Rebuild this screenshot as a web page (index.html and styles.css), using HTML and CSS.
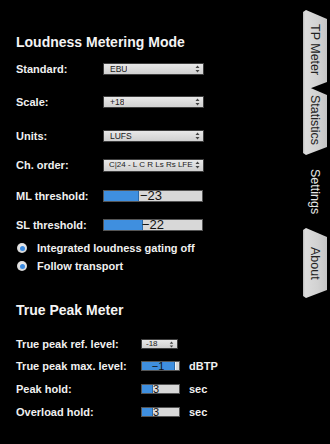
FILE: index.html
```html
<!DOCTYPE html>
<html>
<head>
<meta charset="utf-8">
<link rel="stylesheet" href="styles.css">
</head>
<body>
<div class="app">
  <main class="panel">
    <h2 class="title">Loudness Metering Mode</h2>
    <div class="row r-standard">
      <span class="label">Standard:</span>
      <div class="select"><span class="sel-text">EBU</span><svg class="arrows" width="5" height="8" viewBox="0 0 5 8"><path d="M2.5 0.5 L4.5 3 L0.5 3 Z M0.5 5 L4.5 5 L2.5 7.5 Z" fill="#444"/></svg></div>
    </div>
    <div class="row r-scale">
      <span class="label">Scale:</span>
      <div class="select"><span class="sel-text">+18</span><svg class="arrows" width="5" height="8" viewBox="0 0 5 8"><path d="M2.5 0.5 L4.5 3 L0.5 3 Z M0.5 5 L4.5 5 L2.5 7.5 Z" fill="#444"/></svg></div>
    </div>
    <div class="row r-units">
      <span class="label">Units:</span>
      <div class="select"><span class="sel-text">LUFS</span><svg class="arrows" width="5" height="8" viewBox="0 0 5 8"><path d="M2.5 0.5 L4.5 3 L0.5 3 Z M0.5 5 L4.5 5 L2.5 7.5 Z" fill="#444"/></svg></div>
    </div>
    <div class="row r-ch">
      <span class="label">Ch. order:</span>
      <div class="select select-tall"><span class="sel-text">C|24 - L C R Ls Rs LFE</span><svg class="arrows" width="5" height="8" viewBox="0 0 5 8"><path d="M2.5 0.5 L4.5 3 L0.5 3 Z M0.5 5 L4.5 5 L2.5 7.5 Z" fill="#444"/></svg></div>
    </div>
    <div class="row r-ml">
      <span class="label">ML threshold:</span>
      <div class="slider"><div class="fill" style="width:35px"></div><span class="val">−23</span></div>
    </div>
    <div class="row r-sl">
      <span class="label">SL threshold:</span>
      <div class="slider"><div class="fill" style="width:39px"></div><span class="val val-tight">−22</span></div>
    </div>
    <div class="row radio-row r-radio1">
      <span class="radio"><span class="dot"></span></span>
      <span class="radio-label">Integrated loudness gating off</span>
    </div>
    <div class="row radio-row r-radio2">
      <span class="radio"><span class="dot"></span></span>
      <span class="radio-label">Follow transport</span>
    </div>

    <h2 class="title title2">True Peak Meter</h2>
    <div class="row tp r-ref">
      <span class="label label-wide">True peak ref. level:</span>
      <div class="select select-small"><span class="sel-text">-18</span><svg class="arrows" width="5" height="7" viewBox="0 0 5 8"><path d="M2.5 0.5 L4.5 3 L0.5 3 Z M0.5 5 L4.5 5 L2.5 7.5 Z" fill="#444"/></svg></div>
    </div>
    <div class="row tp r-max">
      <span class="label label-wide">True peak max. level:</span>
      <div class="slider slider-small"><div class="fill fill-center" style="width:33px"><span class="val-small">−1</span></div><span class="sep"></span></div>
      <span class="unit">dBTP</span>
    </div>
    <div class="row tp r-peak">
      <span class="label label-wide">Peak hold:</span>
      <div class="slider slider-small"><div class="fill" style="width:11px"></div><span class="val-small">3</span></div>
      <span class="unit">sec</span>
    </div>
    <div class="row tp r-over">
      <span class="label label-wide">Overload hold:</span>
      <div class="slider slider-small"><div class="fill" style="width:11px"></div><span class="val-small">3</span></div>
      <span class="unit">sec</span>
    </div>
  </main>
  <nav class="tabs">
    <div class="tab tab-tp"><span class="tab-text">TP Meter</span></div>
    <div class="tab tab-stats"><span class="tab-text">Statistics</span></div>
    <div class="tab tab-settings"><span class="tab-text">Settings</span></div>
    <div class="tab tab-about"><span class="tab-text">About</span></div>
  </nav>
</div>
</body>
</html>
```
FILE: styles.css
```css
html, body {
  margin: 0;
  padding: 0;
  background: #000;
}
body {
  font-family: "Liberation Sans", Arial, sans-serif;
  color: #f0f0f0;
}
.app {
  display: flex;
  width: 330px;
  height: 444px;
  overflow: hidden;
}
.panel {
  flex: 1;
  padding: 34px 0 0 16px;
}
.title {
  margin: 0;
  font-size: 14px;
  font-weight: bold;
  line-height: 16px;
  height: 16px;
  color: #f4f4f4;
}
.row {
  display: flex;
  align-items: center;
  height: 20px;
}
.label {
  width: 87px;
  flex: none;
  font-size: 11px;
  font-weight: bold;
}
.label-wide {
  width: 125px;
}
.r-standard { margin-top: 9px; }
.r-scale { margin-top: 13px; }
.r-units { margin-top: 14px; }
.r-ch { margin-top: 9px; }
.r-ml { margin-top: 11px; }
.r-sl { margin-top: 9px; }
.radio-row { height: 18px; }
.r-radio1 { margin-top: 4px; }
.r-radio2 { margin-top: 0; }
.title2 { margin-top: 27px; }
.r-ref { margin-top: 16px; }
.r-max { margin-top: 2px; }
.r-peak { margin-top: 3px; }
.r-over { margin-top: 3px; }

.select {
  box-sizing: border-box;
  width: 101px;
  height: 12px;
  border: 1px solid #3e3e3e;
  background: linear-gradient(#e8e8e8, #d0d0d0);
  display: flex;
  align-items: center;
  padding-left: 6px;
  color: #1a1a1a;
  font-size: 8.5px;
  line-height: 1;
}
.select-tall {
  height: 13px;
  padding-left: 5px;
  font-size: 8px;
}
.select-small {
  width: 37px;
  height: 10px;
  padding-left: 4px;
  font-size: 8px;
}
.sel-text {
  white-space: nowrap;
  overflow: hidden;
}
.arrows {
  margin-left: auto;
  margin-right: 3px;
  flex: none;
}
.slider {
  box-sizing: border-box;
  width: 100px;
  height: 12px;
  border: 1px solid #555;
  background: #d8d8d8;
  display: flex;
  align-items: center;
}
.fill {
  height: 100%;
  background: #3f8fdf;
  box-sizing: border-box;
  border-right: 1px solid #2b6aaa;
  flex: none;
}
.val {
  font-size: 13px;
  line-height: 10px;
  color: #111;
  margin-left: 1px;
}
.val-tight {
  margin-left: -1px;
}
.slider-small {
  width: 39px;
  height: 10px;
}
.fill-center {
  display: flex;
  align-items: center;
  justify-content: center;
}
.sep {
  width: 1px;
  height: 100%;
  background: #f4f4f4;
  flex: none;
}
.val-small {
  font-size: 11px;
  line-height: 8px;
  color: #111;
}
.unit {
  margin-left: 9px;
  font-size: 11px;
  font-weight: bold;
}
.radio {
  box-sizing: border-box;
  width: 10px;
  height: 10px;
  margin-left: 1px;
  border-radius: 50%;
  background: radial-gradient(circle at 50% 40%, #f4f4f4, #c8c8c8);
  display: flex;
  align-items: center;
  justify-content: center;
  flex: none;
}
.dot {
  width: 5px;
  height: 5px;
  border-radius: 50%;
  background: #3a8ae0;
}
.radio-label {
  margin-left: 10px;
  font-size: 11px;
  font-weight: bold;
}

.tabs {
  width: 24px;
  margin-right: 3px;
  display: flex;
  flex-direction: column;
  flex: none;
}
.tab {
  display: flex;
  align-items: center;
  justify-content: center;
  color: #222;
  font-size: 12.5px;
  flex: none;
}
.tab-text {
  writing-mode: vertical-rl;
  white-space: nowrap;
}
.tab-tp, .tab-stats, .tab-about {
  background: linear-gradient(to right, #b8b8b8 0, #dcdcdc 2px, #d2d2d2 60%, #c4c4c4 100%);
  clip-path: polygon(0 2px, 3px 0, 100% 9px, 100% calc(100% - 8px), 3px 100%, 0 calc(100% - 2px));
}
.tab-tp {
  margin-top: 10px;
  height: 80px;
}
.tab-stats {
  margin-top: -4px;
  height: 69px;
}
.tab-settings {
  height: 73px;
  color: #e8e8e8;
}
.tab-about {
  height: 70px;
}
```
